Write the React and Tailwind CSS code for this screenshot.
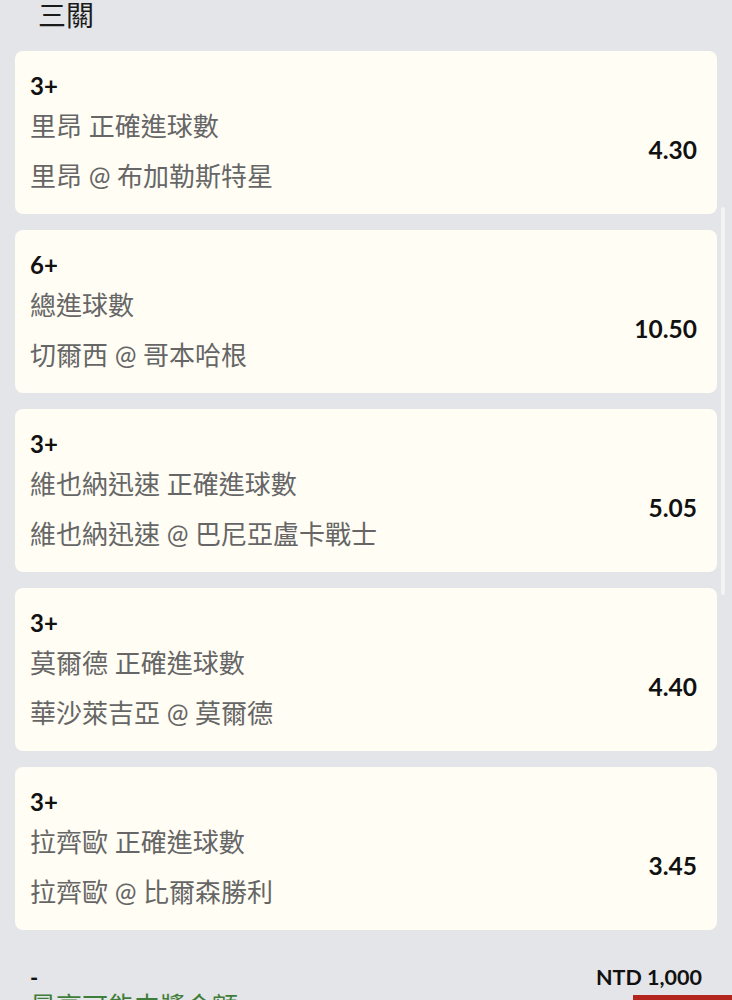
import React from 'react';

const FONT = { fontFamily: "Lato, 'Noto Sans CJK TC', 'Noto Sans', sans-serif" };

const legs = [
    { pick: '3+', market: '里昂 正確進球數', match: '里昂 @ 布加勒斯特星', odds: '4.30' },
    { pick: '6+', market: '總進球數', match: '切爾西 @ 哥本哈根', odds: '10.50' },
    { pick: '3+', market: '維也納迅速 正確進球數', match: '維也納迅速 @ 巴尼亞盧卡戰士', odds: '5.05' },
    { pick: '3+', market: '莫爾德 正確進球數', match: '華沙萊吉亞 @ 莫爾德', odds: '4.40' },
    { pick: '3+', market: '拉齊歐 正確進球數', match: '拉齊歐 @ 比爾森勝利', odds: '3.45' },
];

const LegCard = ({ leg }) => (
    <div className="bg-[#fffdf4] rounded-lg pt-[20px] pb-[20px] pl-[15px] pr-[20px]">
        <div className="text-[24px] leading-[30px] font-bold text-[#111]">{leg.pick}</div>
        <div className="flex items-center justify-between">
            <div className="text-[26px] text-[#666] leading-[36px]">
                <div className="mt-[7px]">{leg.market}</div>
                <div className="mt-[14px]">{leg.match}</div>
            </div>
            <div className="text-[24.5px] font-bold text-[#111] mt-[6px]">{leg.odds}</div>
        </div>
    </div>
);

export default function App() {
    return (
        <div className="relative w-[732px] h-[1000px] overflow-hidden bg-[#e4e5e8]" style={FONT}>
            <div className="pl-[38px] text-[28px] leading-[30px] text-[#1a1a1a]">三關</div>

            <div className="mt-[21px] px-[15px] flex flex-col gap-[16px]">
                {legs.map((leg, i) => <LegCard key={i} leg={leg} />)}
            </div>

            <div className="pl-[30px]">
                <div className="mt-[34px] pr-[30px] flex items-center justify-between h-[26px]">
                    <span className="text-[22px] font-bold text-[#111]">-</span>
                    <span className="text-[21.5px] font-bold text-[#111]">NTD 1,000</span>
                </div>
                <div className="flex items-start justify-between">
                    <span className="text-[26px] leading-[36px] text-[#3f7d3a] mt-[-2px]">最高可能中獎金額</span>
                    <div className="w-[99px] h-[40px] mt-[5px] bg-[#b3261e]"></div>
                </div>
            </div>

            {/* scroll indicator */}
            <div className="absolute left-[721px] top-[207px] w-[4px] h-[388px] rounded-full bg-[#f3f3f3]"></div>
        </div>
    );
}
